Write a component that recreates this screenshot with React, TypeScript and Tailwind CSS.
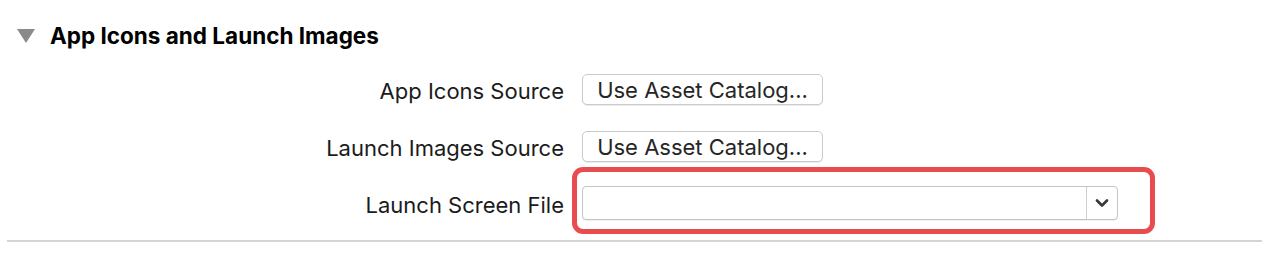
import { ChevronDown } from "lucide-react";

function Row({ label, children }: { label: string; children: React.ReactNode }) {
  return (
    <div className="flex items-center h-[34px]">
      <div className="w-[564px] pt-[3px] text-right text-[22px] text-[#1b1b1b] leading-none">{label}</div>
      <div className="ml-[18px] flex items-center">{children}</div>
    </div>
  );
}

function AssetButton() {
  return (
    <button className="h-[31px] w-[241px] pt-[2px] rounded-[5px] border border-[#cacaca] bg-white text-[22px] text-[#262626] leading-none shadow-[0_1px_0_rgba(0,0,0,0.08)]">
      Use Asset Catalog...
    </button>
  );
}

export default function App() {
  return (
    <div className="w-[1262px] h-[256px] bg-white overflow-hidden" style={{ fontFamily: 'Inter, "Liberation Sans", sans-serif' }}>
      <div className="flex items-center h-[72px] pl-[17px] pb-[1px]">
        <svg width="18" height="14" viewBox="0 0 18 14" className="shrink-0">
          <polygon points="0,0 18,0 9,14" fill="#8a8a8a" />
        </svg>
        <h2 className="ml-[15px] pt-[2px] text-[22.5px] font-bold text-black leading-none">App Icons and Launch Images</h2>
      </div>

      <div className="flex flex-col gap-[23px]">
        <Row label="App Icons Source">
          <AssetButton />
        </Row>
        <Row label="Launch Images Source">
          <AssetButton />
        </Row>
        <Row label="Launch Screen File">
          <div className="relative">
            <div className="flex h-[34px] w-[536px] rounded-[4px] border border-[#c4c4c4] bg-white shadow-[0_1px_0_rgba(0,0,0,0.06)]">
              <div className="flex-1" />
              <div className="w-[31px] border-l border-[#cfcfcf] flex items-center justify-center">
                <ChevronDown className="w-[20px] h-[20px] text-[#3a3a3a]" strokeWidth={3.2} />
              </div>
            </div>
            <div className="absolute left-[-10px] top-[-19px] w-[583px] h-[67px] rounded-[11px] border-[5px] border-[#e94c4f] pointer-events-none" />
          </div>
        </Row>
      </div>

      <div className="ml-[7px] mt-[20px] h-[2px] bg-[#d4d4d4]" />
    </div>
  );
}
